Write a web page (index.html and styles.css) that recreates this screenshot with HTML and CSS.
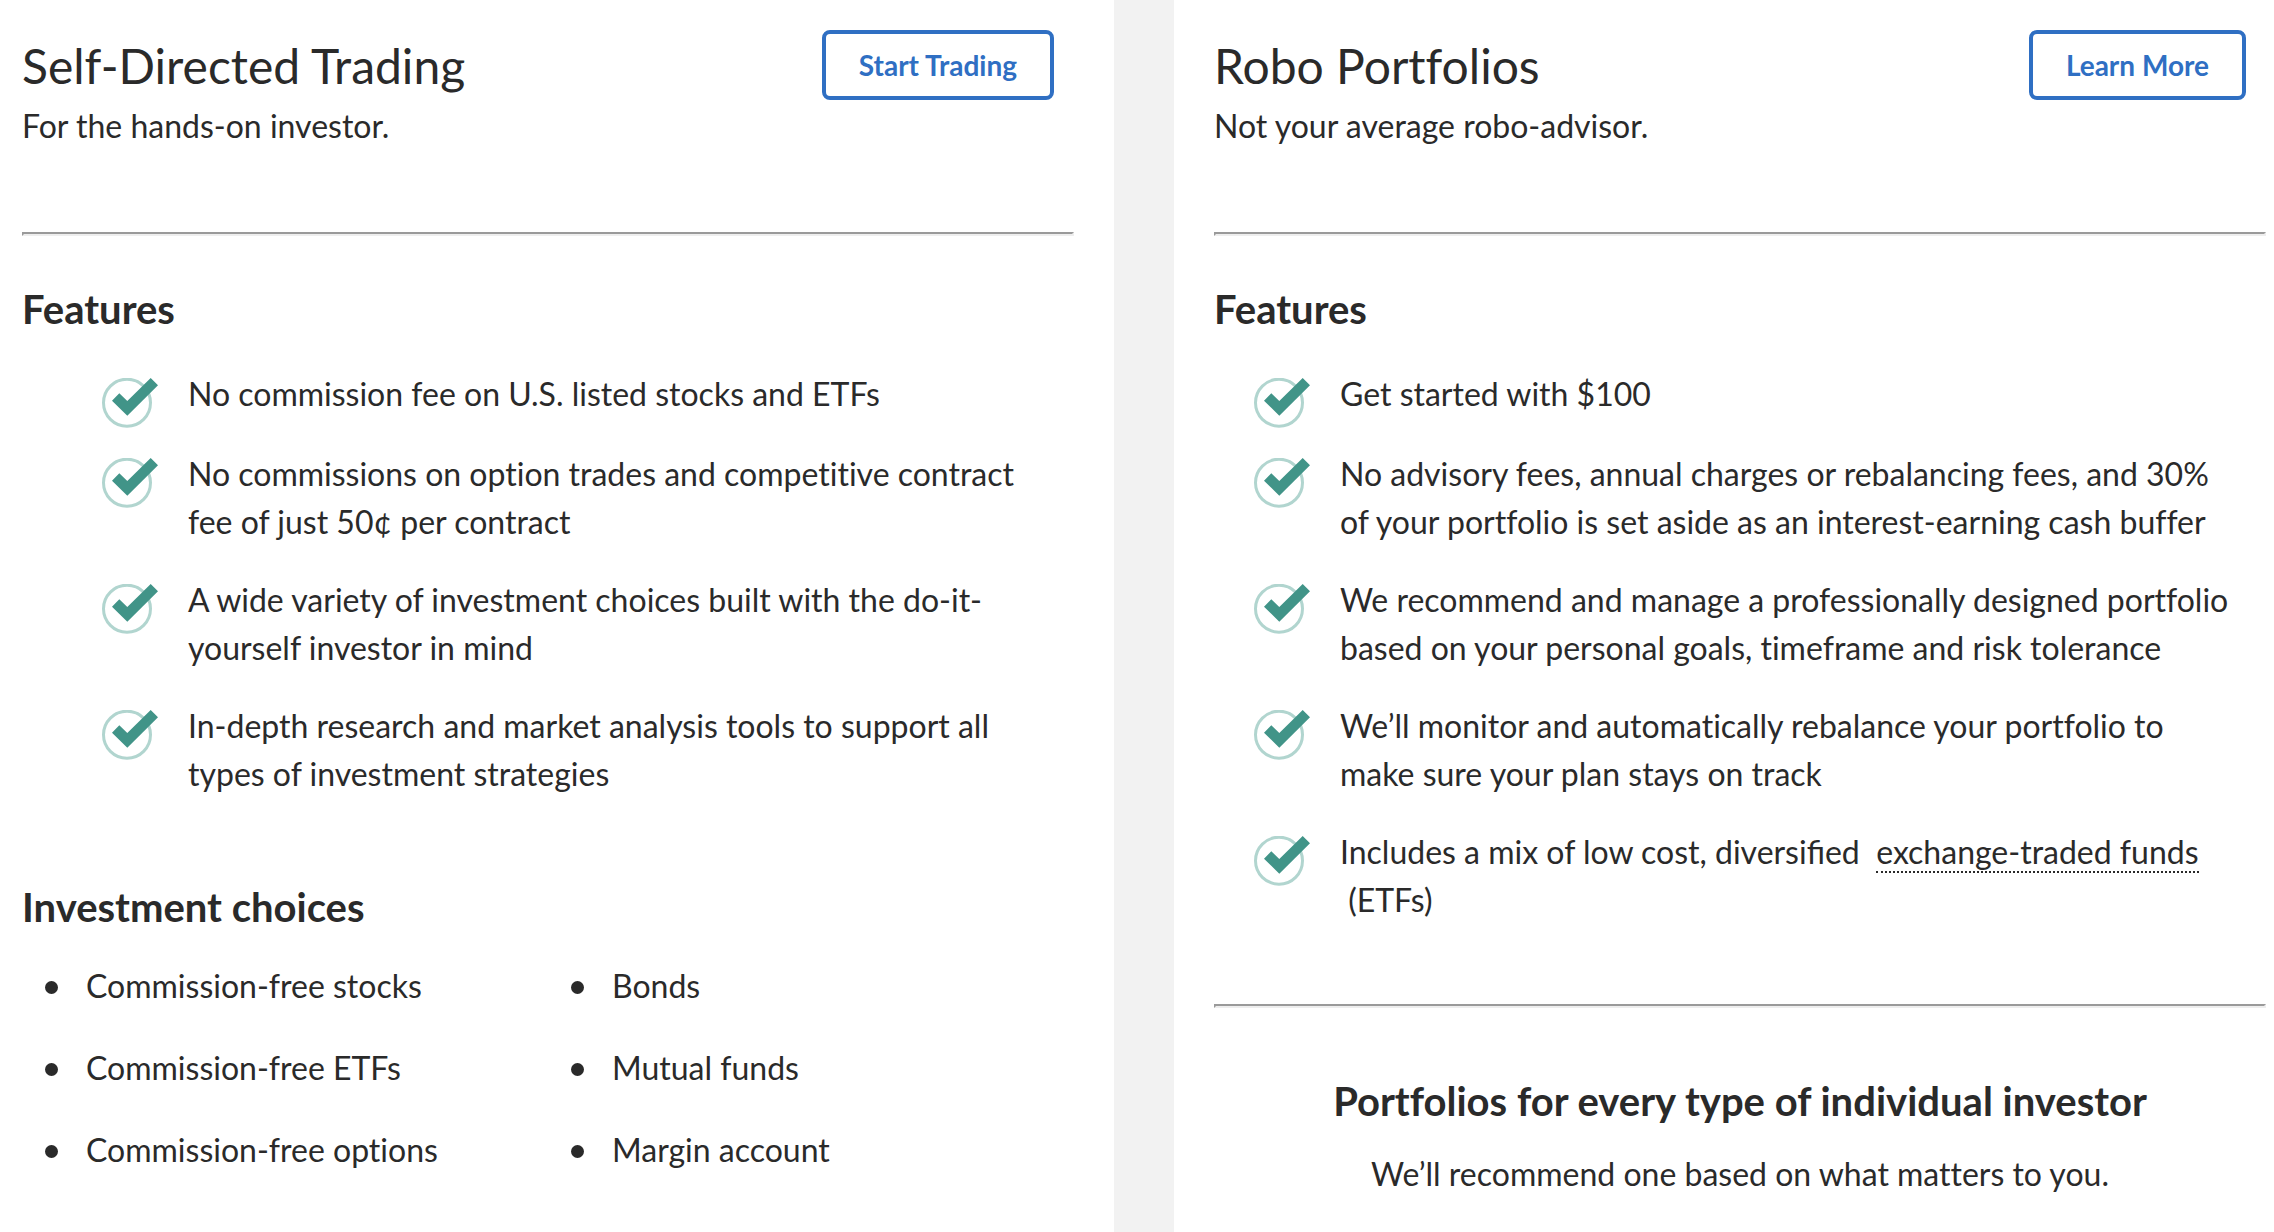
FILE: index.html
```
<!DOCTYPE html>
<html lang="en">

<head>
    <meta charset="UTF-8" />
    <meta name="viewport" content="width=device-width, initial-scale=1.0" />
    <title>Investing</title>
    <link rel="stylesheet" href="styles.css">
</head>

<body>
    <!-- Check mark shared by both feature lists -->
    <svg class="sprite" aria-hidden="true">
        <symbol id="check" viewBox="0 0 56 50">
            <circle cx="25" cy="24.7" r="23.5" fill="none" stroke="#b1d5cf" stroke-width="3" />
            <path d="M10 22.7L17.3 15.3L25.3 23L48.7 0L56 7.3L25.3 37.7Z" fill="#419488" />
        </symbol>
    </svg>

    <main class="plans">
        <section class="plan plan-trading">
            <header class="plan-header">
                <div>
                    <h1>Self-Directed Trading</h1>
                    <p>For the hands-on investor.</p>
                </div>
                <button class="btn" type="button">Start Trading</button>
            </header>
            <hr>
            <h2>Features</h2>
            <ul class="features">
                <li><svg class="check"><use href="#check" /></svg><span>No commission fee on U.S. listed stocks and ETFs</span></li>
                <li><svg class="check"><use href="#check" /></svg><span>No commissions on option trades and competitive contract fee of just 50¢ per contract</span></li>
                <li><svg class="check"><use href="#check" /></svg><span>A wide variety of investment choices built with the do-it-yourself investor in mind</span></li>
                <li><svg class="check"><use href="#check" /></svg><span>In-depth research and market analysis tools to support all types of investment strategies</span></li>
            </ul>
            <h2 class="choices-title">Investment choices</h2>
            <div class="choices">
                <ul>
                    <li>Commission-free stocks</li>
                    <li>Commission-free ETFs</li>
                    <li>Commission-free options</li>
                </ul>
                <ul>
                    <li>Bonds</li>
                    <li>Mutual funds</li>
                    <li>Margin account</li>
                </ul>
            </div>
        </section>

        <section class="plan plan-robo">
            <header class="plan-header">
                <div>
                    <h1>Robo Portfolios</h1>
                    <p>Not your average robo-advisor.</p>
                </div>
                <button class="btn" type="button">Learn More</button>
            </header>
            <hr>
            <h2>Features</h2>
            <ul class="features">
                <li><svg class="check"><use href="#check" /></svg><span>Get started with $100</span></li>
                <li><svg class="check"><use href="#check" /></svg><span>No advisory fees, annual charges or rebalancing fees, and 30% of your portfolio is set aside as an interest-earning cash buffer</span></li>
                <li><svg class="check"><use href="#check" /></svg><span>We recommend and manage a professionally designed portfolio based on your personal goals, timeframe and risk tolerance</span></li>
                <li><svg class="check"><use href="#check" /></svg><span>We’ll monitor and automatically rebalance your portfolio to make sure your plan stays on track</span></li>
                <li><svg class="check"><use href="#check" /></svg><span>Includes a mix of low cost, <span class="ligatures">diversified</span>&nbsp; <a class="term" href="#">exchange-traded funds</a> &nbsp;(ETFs)</span></li>
            </ul>
            <hr class="portfolios-rule">
            <div class="portfolios">
                <h2>Portfolios for every type of individual investor</h2>
                <p>We’ll recommend one based on what matters to you.</p>
            </div>
        </section>
    </main>
</body>

</html>
```
FILE: styles.css
```
* {
    box-sizing: border-box;
}

body {
    margin: 0;
    background-color: #f2f2f2;
    color: #2a2a2a;
    font-family: Lato, "Open Sans", sans-serif;
    font-size: 32px;
    font-variant-ligatures: no-common-ligatures;
    line-height: 48px;
}

h1,
h2,
p,
ul {
    margin: 0;
    padding: 0;
}

ul {
    list-style: none;
}

h1 {
    margin-bottom: 4px;
    font-size: 48px;
    font-weight: 400;
    line-height: 64px;
}

h2 {
    font-size: 40px;
    font-weight: 700;
}

hr {
    margin: 0 0 49px;
    border: 2px solid;
    border-color: #9a9a9a #eeeeee #eeeeee #9a9a9a;
}

.sprite {
    display: none;
}

.ligatures {
    font-variant-ligatures: normal;
}

.plans {
    display: grid;
    grid-template-columns: 1114fr 1100fr;
    gap: 60px;
    min-height: 100vh;
}

.plan {
    background-color: #fff;
}

.plan-trading {
    padding: 30px 40px 32px 22px;
}

.plan-robo {
    padding: 30px 8px 32px 40px;
}

.plan-header {
    display: flex;
    justify-content: space-between;
    align-items: flex-start;
    padding: 0 20px 82px 0;
}

.plan-header > div {
    padding-top: 4px;
}

.btn {
    height: 70px;
    padding: 0 33px;
    border: 4px solid #2f6fc3;
    border-radius: 8px;
    background-color: #fff;
    color: #2f6fc3;
    font-family: inherit;
    font-size: 28px;
    font-weight: 700;
    cursor: pointer;
}

.btn:hover {
    background-color: #2f6fc3;
    color: #fff;
}

.features {
    display: grid;
    gap: 30px;
    padding: 37px 28px 0 40px;
}

.plan-trading .features {
    padding-left: 80px;
}

.features li {
    display: flex;
    align-items: flex-start;
    gap: 30px;
    min-height: 50px;
}

/* Icon hangs a little below the first line of text */
.check {
    flex: none;
    width: 56px;
    height: 50px;
    margin: 8px 0 -8px;
}

.term {
    border-bottom: 2px dotted #2a2a2a;
    color: inherit;
    text-decoration: none;
}

.choices-title {
    margin-top: 85px;
}

.choices {
    display: grid;
    grid-template-columns: 1fr 1fr;
    padding-top: 31px;
}

.choices ul {
    display: grid;
    gap: 34px;
}

.choices li {
    display: flex;
    align-items: center;
    gap: 28px;
    padding-left: 23px;
}

.choices li::before {
    content: "";
    width: 13px;
    height: 13px;
    margin-top: 3px;
    border-radius: 50%;
    background-color: #2a2a2a;
}

.portfolios-rule {
    margin: 80px 0 69px;
}

.portfolios {
    text-align: center;
}

.portfolios p {
    margin-top: 25px;
}

@media only screen and (max-width: 1400px) {
    .plans {
        grid-template-columns: 1fr;
    }
}
```
